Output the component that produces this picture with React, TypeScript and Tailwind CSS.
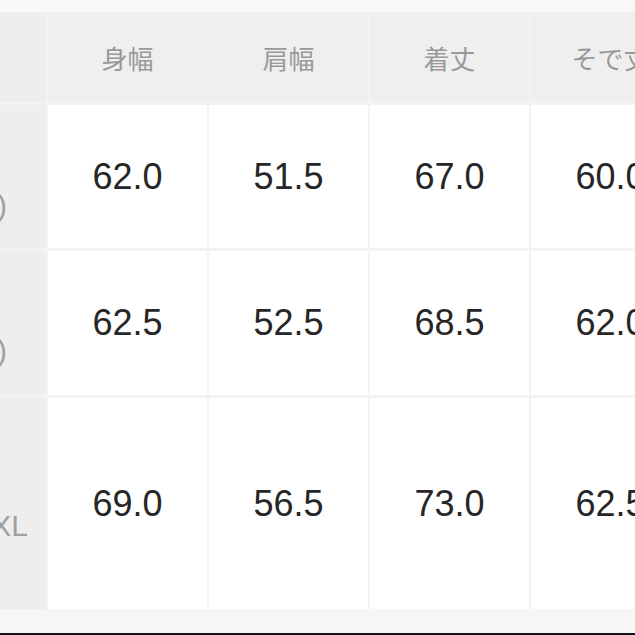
import React from "react";

const headers = ["身幅", "肩幅", "着丈", "そで丈"];
const rows = [
  { label: "M(S)", values: ["62.0", "51.5", "67.0", "60.0"], h: "h-[143px]", pr: "pr-[39px]", pt: "pt-[58px]" },
  { label: "L(M)", values: ["62.5", "52.5", "68.5", "62.0"], h: "h-[144px]", pr: "pr-[39px]", pt: "pt-[54px]" },
  { label: "XL", values: ["69.0", "56.5", "73.0", "62.5"], h: "h-[211px]", pr: "pr-[18px]", pt: "pt-[44px]" },
];

export default function App() {
  return (
    <div className="w-[635px] h-[635px] overflow-hidden bg-[#f7f7f7] flex flex-col">
      <div className="h-[12px] shrink-0 bg-[#f8f8f8]" />
      <div className="flex flex-col gap-y-[3px] bg-[#f3f3f3] w-[700px] shrink-0">
        <div className="flex gap-x-[2px] h-[90px]">
          <div className="w-[46px] shrink-0 bg-[#eeeeee]" />
          {headers.map((h) => (
            <div
              key={h}
              className="w-[159px] shrink-0 bg-[#efefef] flex items-center justify-center text-[26px] text-[#999999] whitespace-nowrap"
              style={{ fontFamily: '"Noto Sans CJK JP", sans-serif' }}
            >
              {h}
            </div>
          ))}
        </div>
        {rows.map((r) => (
          <div key={r.label} className={`flex gap-x-[2px] ${r.h}`}>
            <div
              className={`w-[46px] shrink-0 bg-[#eeeeee] overflow-hidden flex justify-end items-center ${r.pr} ${r.pt}`}
            >
              <span
                className="shrink-0 whitespace-nowrap text-[30px] text-[#a0a0a0]"
                style={{ fontFamily: '"Liberation Sans", Arial, sans-serif' }}
              >
                {r.label}
              </span>
            </div>
            {r.values.map((v, i) => (
              <div
                key={i}
                className="w-[159px] shrink-0 bg-white flex items-center justify-center text-[36px] text-[#262626]"
                style={{ fontFamily: '"Liberation Sans", Arial, sans-serif' }}
              >
                {v}
              </div>
            ))}
          </div>
        ))}
      </div>
      <div className="flex-1 bg-[#f6f6f6]" />
      <div className="h-[2px] shrink-0 bg-[#111111]" />
    </div>
  );
}
